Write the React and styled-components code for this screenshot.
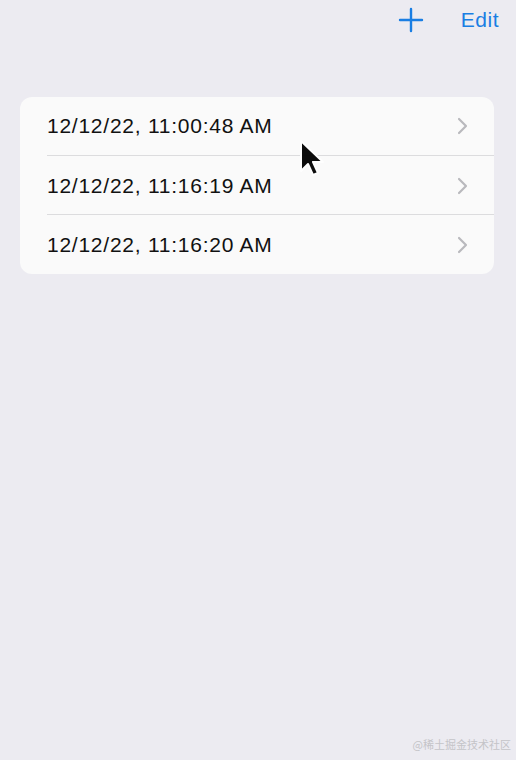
import React from 'react'
import styled, { createGlobalStyle } from 'styled-components'

const GlobalStyle = createGlobalStyle`
   html, body {
      margin: 0;
      padding: 0;
      background: #ecebf1;
   }
   body {
      font-family: 'Liberation Sans', Arial, sans-serif;
   }
`

const Screen = styled.div`
   position: relative;
   width: 516px;
   height: 760px;
   background: #ecebf1;
   overflow: hidden;
   display: flex;
   flex-direction: column;
`

const NavBar = styled.div`
   height: 40px;
   display: flex;
   justify-content: flex-end;
   align-items: center;
   gap: 37px;
   padding: 0 17px 0 0;
`

const NavButton = styled.button`
   border: none;
   background: none;
   padding: 0;
   color: #1a7ee3;
   font-family: inherit;
   font-size: 21px;
   letter-spacing: 0.5px;
   display: flex;
   align-items: center;
`

const Card = styled.div`
   margin: 57px 22px 0 20px;
   background: #fafafa;
   border-radius: 12px;
   overflow: hidden;
`

const Row = styled.div`
   height: 59px;
   display: flex;
   align-items: center;
   padding-left: 27px;
`

const RowInner = styled.div`
   flex: 1;
   height: 100%;
   display: flex;
   align-items: center;
   justify-content: space-between;
   padding-right: 26px;
   border-bottom: ${p => (p.last ? 'none' : '1px solid #dcdcde')};
   box-sizing: border-box;
   padding-top: ${p => (p.first ? '0' : '1px')};
`

const Stamp = styled.span`
   font-size: 21px;
   letter-spacing: 0.75px;
   color: #111;
`

const Watermark = styled.div`
   position: absolute;
   right: 5px;
   bottom: 8px;
   font-size: 11px;
   color: #c4c4c8;
   font-family: 'Noto Sans CJK SC', sans-serif;
`

const Cursor = styled.svg`
   position: absolute;
   left: 298px;
   top: 138px;
`

const Chevron = () => (
   <svg width='12' height='18' viewBox='0 0 12 18'>
      <path d='M3 2l7 7-7 7' fill='none' stroke='#b9b9bd' strokeWidth='2.2' strokeLinecap='round' strokeLinejoin='round' />
   </svg>
)

const stamps = ['12/12/22, 11:00:48 AM', '12/12/22, 11:16:19 AM', '12/12/22, 11:16:20 AM']

const App = () => (
   <Screen>
      <GlobalStyle />
      <NavBar>
         <NavButton aria-label='add'>
            <svg width='26' height='26' viewBox='0 0 26 26'>
               <path d='M13 2v22M2 13h22' stroke='#1a7ee3' strokeWidth='2.4' strokeLinecap='round' />
            </svg>
         </NavButton>
         <NavButton>Edit</NavButton>
      </NavBar>
      <Card>
         {stamps.map((s, i) => (
            <Row key={s}>
               <RowInner last={i === stamps.length - 1} first={i === 0}>
                  <Stamp>{s}</Stamp>
                  <Chevron />
               </RowInner>
            </Row>
         ))}
      </Card>
      <Cursor width='28' height='42' viewBox='0 0 28 42'>
         <path d='M3 3v30l7-7 5 11 5-2-5-11h10z' fill='#000' stroke='#fff' strokeWidth='2' strokeLinejoin='round' opacity='0.95' />
      </Cursor>
      <Watermark>@稀土掘金技术社区</Watermark>
   </Screen>
)

export default App
